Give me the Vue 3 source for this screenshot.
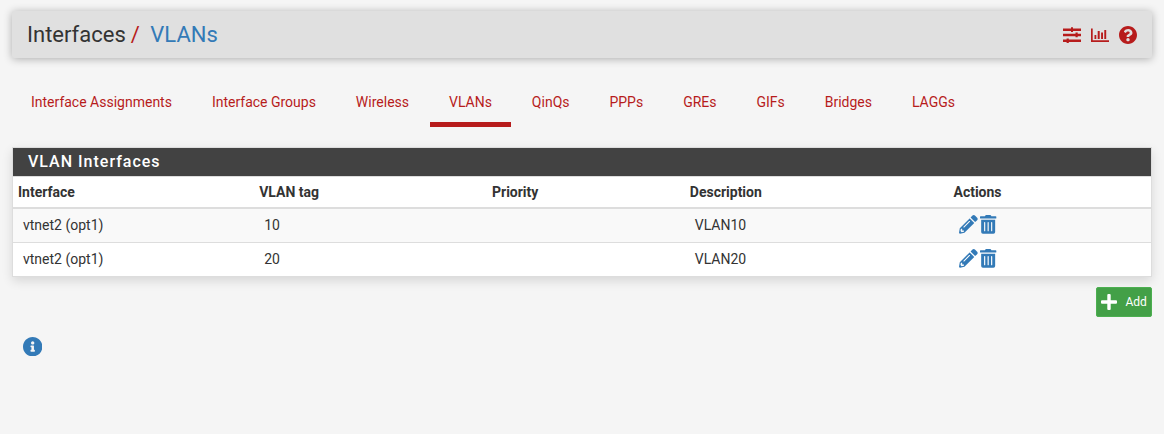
<script setup>
const tabs = ['Interface Assignments', 'Interface Groups', 'Wireless', 'VLANs', 'QinQs', 'PPPs', 'GREs', 'GIFs', 'Bridges', 'LAGGs']
const rows = [
  { iface: 'vtnet2 (opt1)', tag: '10', priority: '', description: 'VLAN10' },
  { iface: 'vtnet2 (opt1)', tag: '20', priority: '', description: 'VLAN20' },
]
</script>

<template>
  <div class="page">
    <header class="header">
      <h1>Interfaces<span class="slash">/</span><a>VLANs</a></h1>
      <div class="tools">
        <svg class="tool" viewBox="0 0 18 18">
          <path d="M0 2.500h18v2.500H0zM0 7.700h18v2.500H0zM0 13.500h18v2.500H0zM8 1.300h2v4.700H8zM12.500 6.600h2.200v4.700h-2.200zM3.600 12.400h2.200v4.700H3.600z" />
        </svg>
        <svg class="tool" viewBox="0 0 18 18">
          <path d="M0 2.500h1.700v11.800H18V16H0zM3.500 9h1.800v4H3.500zM6.700 5h2v8h-2zM10.100 6.500H12V13h-1.900zM13.300 4h1.900v9h-1.900z" />
        </svg>
        <svg class="tool" viewBox="8 8 496 496">
          <path d="M504 256c0 136.997-111.043 248-248 248S8 392.997 8 256C8 119.083 119.043 8 256 8s248 111.083 248 248zM262.655 90c-54.497 0-89.255 22.957-116.549 63.758-3.536 5.286-2.353 12.415 2.715 16.258l34.699 26.31c5.205 3.947 12.621 3.008 16.665-2.122 17.864-22.658 30.113-35.797 57.303-35.797 20.429 0 45.698 13.148 45.698 32.958 0 14.976-12.363 22.667-32.534 33.976C247.128 238.528 216 254.941 216 296v4c0 6.627 5.373 12 12 12h56c6.627 0 12-5.373 12-12v-1.333c0-28.462 83.186-29.647 83.186-106.667 0-58.002-60.165-102-116.531-102zM256 338c-25.365 0-46 20.635-46 46 0 25.364 20.635 46 46 46s46-20.636 46-46c0-25.365-20.635-46-46-46z" />
        </svg>
      </div>
    </header>

    <nav class="tabs">
      <a v-for="tab in tabs" :key="tab" :class="{ active: tab === 'VLANs' }">{{ tab }}</a>
    </nav>

    <section class="panel">
      <h2>VLAN Interfaces</h2>
      <table>
        <colgroup>
          <col class="c-iface" /><col class="c-tag" /><col class="c-priority" /><col class="c-desc" /><col />
        </colgroup>
        <thead>
          <tr><th>Interface</th><th>VLAN tag</th><th>Priority</th><th>Description</th><th>Actions</th></tr>
        </thead>
        <tbody>
          <tr v-for="row in rows" :key="row.tag">
            <td>{{ row.iface }}</td>
            <td>{{ row.tag }}</td>
            <td>{{ row.priority }}</td>
            <td>{{ row.description }}</td>
            <td>
              <div class="actions">
                <svg class="pencil" viewBox="0 0 512 512">
                  <path d="M497.9 142.1l-46.1 46.1c-4.7 4.7-12.3 4.7-17 0l-111-111c-4.7-4.7-4.7-12.3 0-17l46.1-46.1c18.7-18.7 49.1-18.7 67.9 0l60.1 60.1c18.8 18.7 18.8 49.1 0 67.9zM284.2 99.8L21.6 362.4.4 483.9c-2.9 16.4 11.4 30.6 27.8 27.8l121.5-21.3 262.6-262.6c4.7-4.7 4.7-12.3 0-17l-111-111c-4.8-4.7-12.4-4.7-17.1 0zM124.1 339.9c-5.5-5.5-5.5-14.3 0-19.8l154-154c5.5-5.5 14.3-5.5 19.8 0s5.5 14.3 0 19.8l-154 154c-5.5 5.5-14.3 5.5-19.8 0zM88 424h48v36.3l-64.5 11.3-31.1-31.1L51.7 376H88v48z" />
                </svg>
                <svg class="trash" viewBox="0 0 448 512">
                  <path d="M32 464a48 48 0 0 0 48 48h288a48 48 0 0 0 48-48V128H32zm272-256a16 16 0 0 1 32 0v224a16 16 0 0 1-32 0zm-96 0a16 16 0 0 1 32 0v224a16 16 0 0 1-32 0zm-96 0a16 16 0 0 1 32 0v224a16 16 0 0 1-32 0zM432 32H312l-9.4-18.7A24 24 0 0 0 281.1 0H166.8a23.72 23.72 0 0 0-21.4 13.3L136 32H16A16 16 0 0 0 0 48v32a16 16 0 0 0 16 16h416a16 16 0 0 0 16-16V48a16 16 0 0 0-16-16z" />
                </svg>
              </div>
            </td>
          </tr>
        </tbody>
      </table>
    </section>

    <div class="buttons">
      <button class="add">
        <svg viewBox="0 0 16 16"><path d="M6.300 1q0-1 1-1h1.400q1 0 1 1v5.300H15q1 0 1 1v1.400q0 1-1 1H9.700V15q0 1-1 1H7.300q-1 0-1-1V9.700H1q-1 0-1-1V7.300q0-1 1-1h5.300z" /></svg>
        Add
      </button>
    </div>

    <svg class="info" viewBox="8 8 496 496">
      <path d="M256 8C119.043 8 8 119.083 8 256c0 136.997 111.043 248 248 248s248-111.003 248-248C504 119.083 392.957 8 256 8zm0 110c23.196 0 42 18.804 42 42s-18.804 42-42 42-42-18.804-42-42 18.804-42 42-42zm56 254c0 6.627-5.373 12-12 12h-88c-6.627 0-12-5.373-12-12v-24c0-6.627 5.373-12 12-12h12v-64h-12c-6.627 0-12-5.373-12-12v-24c0-6.627 5.373-12 12-12h64c6.627 0 12 5.373 12 12v100h12c6.627 0 12 5.373 12 12v24z" />
    </svg>
  </div>
</template>

<style>
body { background: #f5f5f5; }
</style>

<style scoped>
.page {
  box-sizing: border-box;
  height: 434px;
  padding: 11px 12px 0;
  overflow: hidden;
  background: #f5f5f5;
  color: #333;
  font: 14px/20px Roboto, sans-serif;
}
svg { display: block; fill: currentColor; }
.header {
  display: flex;
  align-items: center;
  justify-content: space-between;
  box-sizing: border-box;
  height: 47px;
  padding: 0 15px;
  border-radius: 2px;
  background: #e0e0e0;
  box-shadow: 0 1px 9px rgba(0, 0, 0, 0.3);
}
h1 { margin: 0; font-size: 22px; font-weight: 400; line-height: 24px; }
.slash { margin: 0 10.500px 0 5px; color: #b71c1c; }
h1 a { color: #337ab7; }
.tools { display: flex; gap: 10px; padding-top: 1px; color: #b71c1c; }
.tool { width: 18px; height: 18px; }
.tabs { display: flex; gap: 1.96px; margin-top: 24px; }
.tabs a {
  padding: 10px 19px;
  border-bottom: 5px solid transparent;
  color: #b71c1c;
}
.tabs .active { border-color: #b71c1c; }
.panel {
  margin-top: 20px;
  border: 1px solid #ddd;
  background: #fff;
  box-shadow: 0 4px 10px rgba(0, 0, 0, 0.12);
}
h2 {
  height: 28px;
  margin: 0;
  padding-left: 15px;
  border-bottom: 1px solid #ddd;
  background: #424242;
  background-clip: padding-box;
  color: #fff;
  font-size: 16px;
  font-weight: 500;
  line-height: 27px;
  letter-spacing: 1px;
}
table { width: 100%; border-spacing: 0; table-layout: fixed; }
.c-iface { width: 241.2px; }
.c-tag { width: 232.8px; }
.c-priority { width: 197.8px; }
.c-desc { width: 263.7px; }
th { height: 30px; padding: 0 5px; border-bottom: 2px solid #ddd; text-align: left; font-weight: 700; }
td { height: 31px; padding: 0 10px 2px; border-top: 1px solid #ddd; }
tbody tr:first-child td { border-top: 0; background: #f9f9f9; }
.actions { display: flex; gap: 2.6px; padding-left: 0.5px; color: #337ab7; }
.pencil { width: 18.67px; height: 18.67px; }
.trash { width: 16.33px; height: 18.67px; }
.buttons { display: flex; justify-content: flex-end; margin-top: 10px; }
.add {
  display: flex;
  align-items: center;
  gap: 9px;
  box-sizing: border-box;
  width: 56px;
  height: 30px;
  padding: 0 4px 0 3.500px;
  border: 1px solid #4caf50;
  border-radius: 2px;
  background: #43a047;
  color: #fff;
  font: 12px/18px Roboto, sans-serif;
}
.add svg { flex: none; width: 16px; height: 16px; }
.info { width: 19.4px; height: 19.4px; margin: 19.700px 0 0 10.600px; color: #337ab7; }
</style>
